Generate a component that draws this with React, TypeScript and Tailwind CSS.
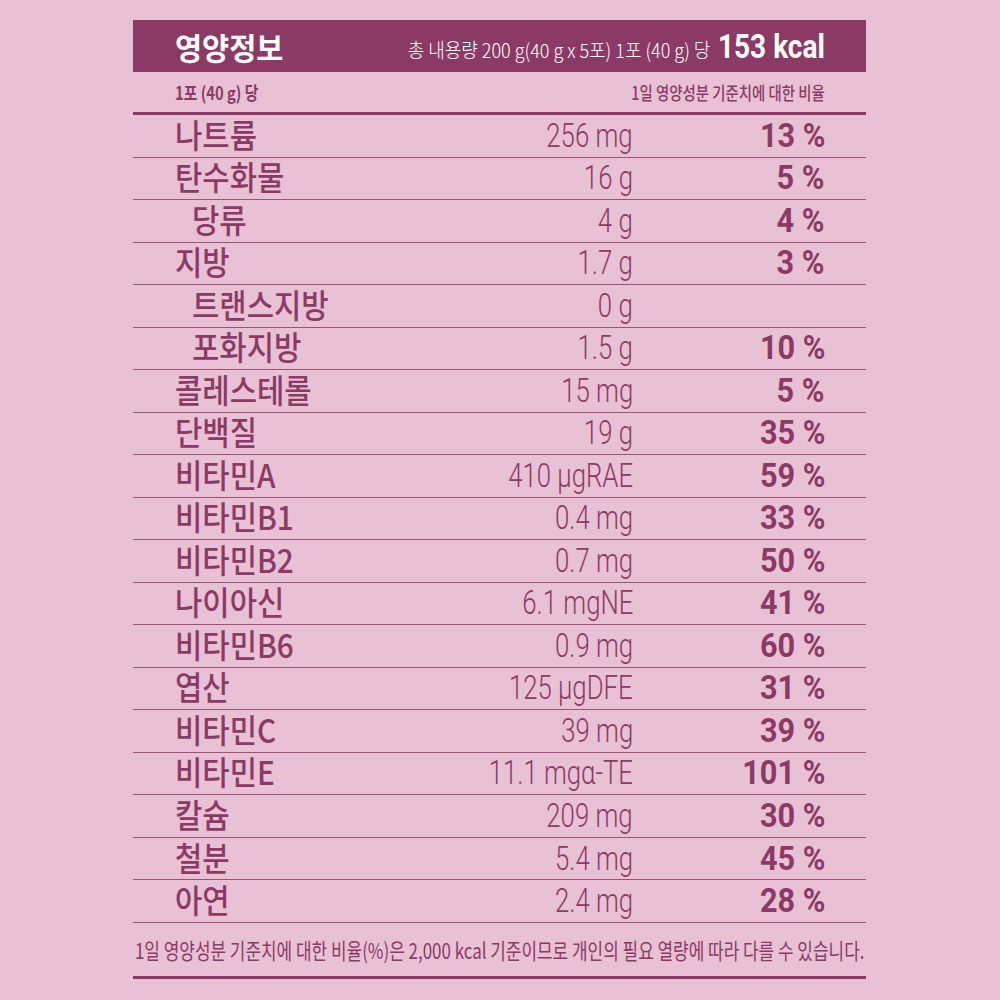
import React from 'react';

const ROWS = [
  { name: '나트륨', amount: '256 mg', pct: '13 %' },
  { name: '탄수화물', amount: '16 g', pct: '5 %' },
  { name: '당류', amount: '4 g', pct: '4 %', sub: true },
  { name: '지방', amount: '1.7 g', pct: '3 %' },
  { name: '트랜스지방', amount: '0 g', pct: '', sub: true },
  { name: '포화지방', amount: '1.5 g', pct: '10 %', sub: true },
  { name: '콜레스테롤', amount: '15 mg', pct: '5 %' },
  { name: '단백질', amount: '19 g', pct: '35 %' },
  { name: '비타민A', amount: '410 μgRAE', pct: '59 %' },
  { name: '비타민B1', amount: '0.4 mg', pct: '33 %' },
  { name: '비타민B2', amount: '0.7 mg', pct: '50 %' },
  { name: '나이아신', amount: '6.1 mgNE', pct: '41 %' },
  { name: '비타민B6', amount: '0.9 mg', pct: '60 %' },
  { name: '엽산', amount: '125 μgDFE', pct: '31 %' },
  { name: '비타민C', amount: '39 mg', pct: '39 %' },
  { name: '비타민E', amount: '11.1 mgα-TE', pct: '101 %' },
  { name: '칼슘', amount: '209 mg', pct: '30 %' },
  { name: '철분', amount: '5.4 mg', pct: '45 %' },
  { name: '아연', amount: '2.4 mg', pct: '28 %' },
];

const kr = "font-['Noto_Sans_CJK_KR','Noto_Sans',sans-serif]";
const num = "font-['Roboto','Noto_Sans_CJK_KR',sans-serif]";

export default function App() {
  return (
    <div className="w-[1000px] h-[1000px] bg-[#e8c1d4] pt-5 pl-[133px] text-[#8b3a65]">
      <div className="w-[733px]">
        {/* Header */}
        <div className="h-[52px] bg-[#8b3a65] flex items-center justify-between pl-[42px] pr-[41px] text-white">
          <span className={`${kr} inline-block text-[31px] font-bold leading-none scale-x-[0.95] origin-left`}>영양정보</span>
          <div className="flex items-baseline">
            <span className={`${kr} inline-block -mr-[11px] text-[20px] font-light leading-none scale-x-[0.9] origin-right whitespace-nowrap`}>
              총 내용량 200 g(40 g x 5포) 1포 (40 g) 당
            </span>
            <span className={`${num} inline-block text-[33px] font-bold leading-none scale-x-[0.85] origin-right`}>153 kcal</span>
          </div>
        </div>

        {/* Sub header */}
        <div className="h-[43px] border-b-[3px] border-[#8b3a65] flex items-center justify-between pl-[42px] pr-[41px]">
          <span className={`${kr} inline-block text-[18px] font-bold leading-none scale-x-[0.82] origin-left`}>1포 (40 g) 당</span>
          <span className={`${kr} inline-block text-[18px] font-medium leading-none scale-x-[0.8] origin-right whitespace-nowrap`}>
            1일 영양성분 기준치에 대한 비율
          </span>
        </div>

        {/* Rows */}
        {ROWS.map((r) => (
          <div key={r.name} className="h-[42.53px] border-b-[1.5px] border-[#a14f7b] flex items-center pr-[41px]">
            <div className={`flex-1 ${r.sub ? 'pl-[59px]' : 'pl-[42px]'}`}>
              <span className={`${kr} inline-block text-[33px] font-medium leading-none scale-x-[0.9] origin-left whitespace-nowrap`}>
                {r.name}
              </span>
            </div>
            <div className="w-[200px] text-right">
              <span className={`${num} inline-block text-[33px] font-light leading-none scale-x-[0.78] origin-right whitespace-nowrap`}>
                {r.amount}
              </span>
            </div>
            <div className="w-[192px] text-right">
              <span className={`${num} inline-block text-[33px] font-bold leading-none scale-x-[0.93] origin-right whitespace-nowrap`}>
                {r.pct}
              </span>
            </div>
          </div>
        ))}

        {/* Footer */}
        <div className="h-[56px] border-b-[3px] border-[#8b3a65] flex items-center justify-center">
          <span className={`${kr} inline-block text-[22px] leading-none scale-x-[0.77] origin-center whitespace-nowrap`}>
            1일 영양성분 기준치에 대한 비율(%)은 2,000 kcal 기준이므로 개인의 필요 열량에 따라 다를 수 있습니다.
          </span>
        </div>
      </div>
    </div>
  );
}
